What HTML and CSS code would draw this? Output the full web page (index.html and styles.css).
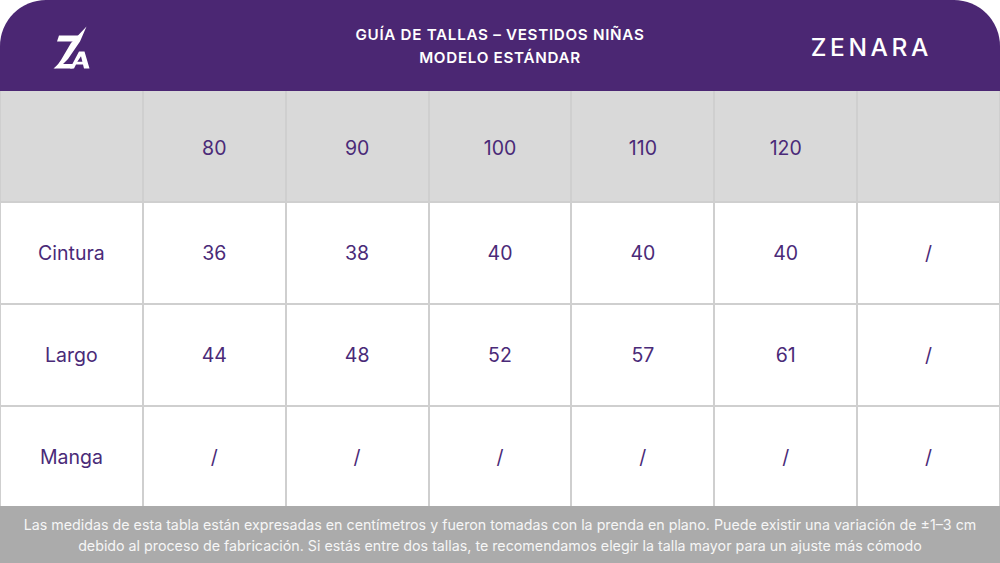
FILE: index.html
```html
<!DOCTYPE html>
<html lang="es">
<head>
<meta charset="utf-8">
<title>Guía de tallas - Zenara</title>
<link rel="stylesheet" href="styles.css">
</head>
<body>
<div class="page">
  <header class="top">
    <div class="logo">
      <svg width="40" height="44" viewBox="50 20 40 44" aria-label="ZA">
        <polygon fill="#fff" points="59,30.5 79.5,30.5 77.5,36.5 57,36.5"/>
        <polygon fill="#fff" points="86.5,21.5 80,36.5 68,54 62,60 55,63.5 61,55 71,38 78,30.5"/>
        <polygon fill="#fff" points="53.5,63.5 72.5,63.5 74,59 58.5,59"/>
        <path fill="#fff" fill-rule="evenodd" d="M70,63.5 L79,46.5 L84.5,46.5 L89.5,63.5 L84,63.5 L83,59.5 L76,59.5 L74,63.5 Z M77.3,56.8 L82.4,56.8 L81,51.2 Z"/>
      </svg>
    </div>
    <div class="title">
      <div>GUÍA DE TALLAS – VESTIDOS NIÑAS</div>
      <div>MODELO ESTÁNDAR</div>
    </div>
    <div class="brand">ZENARA</div>
  </header>
  <section class="chart">
    <div class="cell head"></div>
    <div class="cell head">80</div>
    <div class="cell head">90</div>
    <div class="cell head">100</div>
    <div class="cell head">110</div>
    <div class="cell head">120</div>
    <div class="cell head"></div>

    <div class="cell">Cintura</div>
    <div class="cell">36</div>
    <div class="cell">38</div>
    <div class="cell">40</div>
    <div class="cell">40</div>
    <div class="cell">40</div>
    <div class="cell">/</div>

    <div class="cell">Largo</div>
    <div class="cell">44</div>
    <div class="cell">48</div>
    <div class="cell">52</div>
    <div class="cell">57</div>
    <div class="cell">61</div>
    <div class="cell">/</div>

    <div class="cell">Manga</div>
    <div class="cell">/</div>
    <div class="cell">/</div>
    <div class="cell">/</div>
    <div class="cell">/</div>
    <div class="cell">/</div>
    <div class="cell">/</div>
  </section>
  <footer class="note">
    Las medidas de esta tabla están expresadas en centímetros y fueron tomadas con la prenda en plano. Puede existir una variación de ±1–3 cm<br>
    debido al proceso de fabricación. Si estás entre dos tallas, te recomendamos elegir la talla mayor para un ajuste más cómodo
  </footer>
</div>
</body>
</html>
```

FILE: styles.css
```css
* { box-sizing: border-box; }
html, body {
  margin: 0;
  padding: 0;
  background: #ffffff;
}
body {
  font-family: "Inter", "DejaVu Sans", sans-serif;
  width: 1000px;
  height: 563px;
  overflow: hidden;
}
.page {
  display: flex;
  flex-direction: column;
  width: 1000px;
  height: 563px;
}
.top {
  height: 91px;
  background: #4b2773;
  border-radius: 46px 46px 0 0;
  display: grid;
  grid-template-columns: 1fr auto 1fr;
  align-items: center;
  color: #ffffff;
}
.logo {
  padding-left: 50px;
  display: flex;
  align-items: center;
  padding-top: 2px;
}
.logo svg { display: block; }
.title {
  text-align: center;
  font-weight: 600;
  font-size: 15.2px;
  letter-spacing: 0.7px;
  line-height: 23px;
  padding-top: 1px;
}
.brand {
  justify-self: end;
  padding-right: 68px;
  font-size: 24.5px;
  font-weight: 500;
  letter-spacing: 3.6px;
  padding-top: 2px;
}
.chart {
  display: grid;
  grid-template-columns: repeat(7, 1fr);
  grid-template-rows: 110px 100px 100px 99px;
  gap: 2px;
  padding: 0 1px 0 1px;
  background: #cfcfcf;
  height: 415px;
}
.cell {
  background: #ffffff;
  display: flex;
  align-items: center;
  justify-content: center;
  color: #4a2a78;
  font-size: 19.5px;
  font-weight: 400;
}
.cell.head {
  background: #d9d9d9;
  padding-top: 3px;
}
.note {
  flex: 1;
  background: #ababab;
  color: #f6f6f6;
  text-align: center;
  font-size: 14.25px;
  line-height: 21px;
  display: flex;
  align-items: center;
  justify-content: center;
  padding-top: 1px;
}
```
